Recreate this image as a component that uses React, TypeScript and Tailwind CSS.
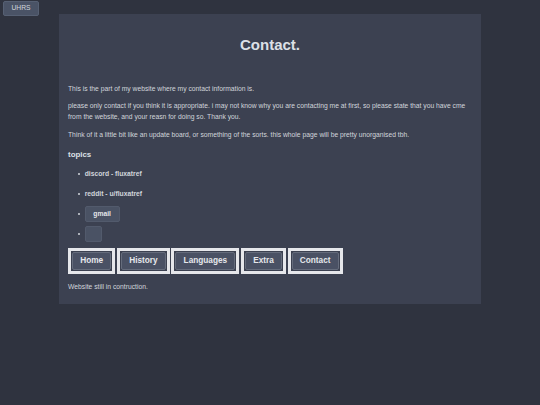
import React from "react";

const navItems = ["Home", "History", "Languages", "Extra", "Contact"];

function Bullet() {
  return <span className="mr-[4.7px] inline-block h-[2.5px] w-[2.5px] shrink-0 rounded-full bg-[#d1d5db]" />;
}

export default function App() {
  return (
    <div
      className="relative min-h-[405px] w-full bg-[#2f333f] pt-[14px] pb-[100px] text-[#d1d5db]"
      style={{ fontFamily: '"Liberation Sans", Arial, sans-serif' }}
    >
      <button className="absolute left-[3px] top-[1px] flex h-[15px] w-[36px] items-center justify-center rounded-[2px] border border-[#566073] bg-[#4a5366] text-[6.75px] text-[#d1d5db]">
        UHRS
      </button>

      <div className="mx-auto w-[422px] bg-[#3c4151] px-[9px] pt-[22px] pb-[12px]">
        <h1 className="h-[17px] text-center text-[15px] font-bold leading-[17px] text-[#dde0e6]">
          Contact.
        </h1>

        <div className="mt-[30px] flex flex-col gap-[6.3px] text-[6.75px] leading-[11px]">
          <p>This is the part of my website where my contact information is.</p>
          <p>
            please only contact if you think it is appropriate. i may not know why you are contacting me at first, so
            please state that you have cme from the website, and your reasn for doing so. Thank you.
          </p>
          <p>Think of it a little bit like an update board, or something of the sorts. this whole page will be pretty unorganised tbh.</p>
        </div>

        <h3 className="mt-[10px] text-[7.9px] font-bold leading-[9px] text-[#dde0e6]">topics</h3>

        <ul className="mt-[5.5px] flex flex-col text-[6.75px] font-bold">
          <li className="flex h-[20px] items-center pl-[9.5px]">
            <Bullet />
            <span>discord - fluxatref</span>
          </li>
          <li className="flex h-[20px] items-center pl-[9.5px]">
            <Bullet />
            <span>reddit - u/fluxatref</span>
          </li>
          <li className="flex h-[20px] items-center pl-[9.5px]">
            <Bullet />
            <button className="flex h-[15.4px] w-[35px] items-center justify-center rounded-[2px] border border-[#525a6c] bg-[#4a5264] text-[6.75px] font-bold text-[#e5e7eb]">
              gmail
            </button>
          </li>
          <li className="flex h-[20px] items-center pl-[9.5px]">
            <Bullet />
            <button className="h-[16px] w-[17px] rounded-[2px] border border-[#525a6c] bg-[#4a5264]" />
          </li>
        </ul>

        <nav className="mt-[4px] flex gap-[1.5px]">
          {navItems.map((item) => (
            <div key={item} className="border-[3px] border-[#e6e7eb] p-px">
              <button className="flex h-[18px] items-center rounded-[2px] border border-[#656c7c] bg-[#4a5164] px-[7.25px] text-[8.25px] font-bold text-[#e5e7eb]">
                {item}
              </button>
            </div>
          ))}
        </nav>

        <p className="mt-[7px] text-[6.75px] leading-[11px]">Website still in contruction.</p>
      </div>
    </div>
  );
}
